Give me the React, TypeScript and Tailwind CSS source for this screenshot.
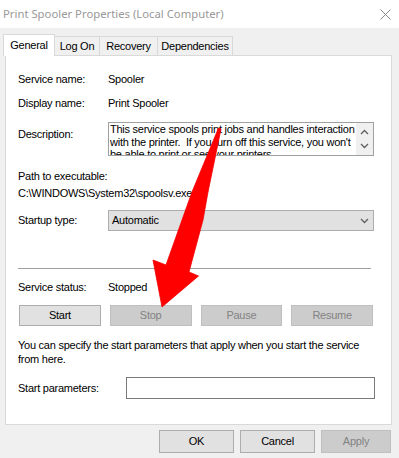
import React from 'react';

const body = { fontFamily: '"Liberation Sans", Arial, sans-serif' };
const title = { fontFamily: '"Noto Sans", "Open Sans", sans-serif' };

function Tab({ label, active, width }: { label: string; active?: boolean; width: string }) {
  if (active) {
    return (
      <div
        className={`${width} relative z-10 -mb-px h-[22px] border border-b-0 border-[#d9d9d9] bg-white flex items-center justify-center text-[11px] text-black`}
      >
        {label}
      </div>
    );
  }
  return (
    <div
      className={`${width} h-[19px] border border-b-0 border-l-0 border-[#d9d9d9] bg-[#f0f0f0] flex items-center justify-center text-[11px] text-black`}
    >
      {label}
    </div>
  );
}

function Btn({ label, disabled, className = '' }: { label: string; disabled?: boolean; className?: string }) {
  return (
    <div
      className={`h-[21px] flex items-center justify-center border text-[11px] ${
        disabled ? 'bg-[#cccccc] border-[#bfbfbf] text-[#838383]' : 'bg-[#e1e1e1] border-[#adadad] text-black'
      } ${className}`}
    >
      {label}
    </div>
  );
}

function Chevron({ up }: { up?: boolean }) {
  return (
    <svg width="9" height="6" viewBox="0 0 9 6" className="block">
      <polyline
        points={up ? '1,5 4.5,1.5 8,5' : '1,1 4.5,4.5 8,1'}
        fill="none"
        stroke="#606060"
        strokeWidth="1.3"
      />
    </svg>
  );
}

export default function App() {
  return (
    <div className="relative w-[399px] h-[458px] overflow-hidden bg-[#f0f0f0] tracking-[-0.25px]" style={body}>
      {/* Title bar */}
      <div className="h-[28px] bg-white flex items-center justify-between pl-[3px] pr-[8px]">
        <span className="text-[11.3px] tracking-normal text-[#999999]" style={title}>
          Print Spooler Properties (Local Computer)
        </span>
        <svg width="11" height="11" viewBox="0 0 11 11">
          <path d="M0.5 0.5L10.5 10.5M10.5 0.5L0.5 10.5" stroke="#8a8a8a" strokeWidth="1" />
        </svg>
      </div>

      {/* Tabs */}
      <div className="flex items-end pl-[3px] pt-[6px]">
        <Tab label="General" active width="w-[52px]" />
        <Tab label="Log On" width="w-[45px]" />
        <Tab label="Recovery" width="w-[58px]" />
        <Tab label="Dependencies" width="w-[75px]" />
      </div>

      {/* Panel */}
      <div className="ml-[5px] w-[387px] h-[370px] border border-[#d9d9d9] bg-white pl-[12px] pr-[17px] text-[11px] text-black">
        <div className="mt-[16px] flex h-[14px] items-center">
          <span className="w-[90px]">Service name:</span>
          <span>Spooler</span>
        </div>
        <div className="mt-[10px] flex h-[14px] items-center">
          <span className="w-[90px]">Display name:</span>
          <span>Print Spooler</span>
        </div>
        <div className="mt-[12px] flex items-start">
          <span className="w-[90px] pt-[5px] leading-[14px]">Description:</span>
          <div className="flex h-[34px] flex-1 border border-[#a0a0a0] overflow-hidden">
            <div className="flex-1 pl-[1px] leading-[12.7px] text-[11px] text-black whitespace-nowrap overflow-hidden">
              <div>This service spools print jobs and handles interaction</div>
              <div>with the printer.&nbsp; If you turn off this service, you won't</div>
              <div>be able to print or see your printers.</div>
            </div>
            <div className="w-[17px] bg-[#f0f0f0] flex flex-col items-center pt-[6px] gap-[8px]">
              <Chevron up />
              <Chevron />
            </div>
          </div>
        </div>
        <div className="mt-[13px] h-[14px] flex items-center">Path to executable:</div>
        <div className="mt-[3px] h-[14px] flex items-center">C:\WINDOWS\System32\spoolsv.exe</div>
        <div className="mt-[10px] flex items-center">
          <span className="w-[90px]">Startup type:</span>
          <div className="flex-1 h-[21px] border border-[#adadad] bg-[#e1e1e1] flex items-center justify-between pl-[3px] pr-[4px]">
            <span>Automatic</span>
            <Chevron />
          </div>
        </div>
        <div className="mt-[37px] mr-[3px] h-px bg-[#a0a0a0]" />
        <div className="mt-[11px] flex h-[14px] items-center">
          <span className="w-[90px]">Service status:</span>
          <span>Stopped</span>
        </div>
        <div className="mt-[11px] ml-[1px] mr-[1px] grid grid-cols-4 gap-[9px]">
          <Btn label="Start" />
          <Btn label="Stop" disabled />
          <Btn label="Pause" disabled />
          <Btn label="Resume" disabled />
        </div>
        <div className="mt-[12px] leading-[14px] whitespace-nowrap">
          You can specify the start parameters that apply when you start the service
          <br />
          from here.
        </div>
        <div className="mt-[11px] flex items-center">
          <span className="w-[108px]">Start parameters:</span>
          <div className="flex-1 -mr-[1px] h-[22px] border border-[#7a7a7a] bg-white" />
        </div>
      </div>

      {/* Dialog buttons */}
      <div className="mt-[5px] flex justify-end gap-[6px] pr-[8px]">
        <Btn label="OK" className="w-[75px] h-[23px]" />
        <Btn label="Cancel" className="w-[75px] h-[23px]" />
        <Btn label="Apply" disabled className="w-[70px] h-[23px]" />
      </div>

      {/* Red arrow overlay */}
      <svg
        className="absolute left-0 top-0 pointer-events-none"
        width="399"
        height="458"
        viewBox="0 0 399 458"
      >
        <polygon
          points="218.5,128 221,129 208,192 203,220 189,272 198.5,276 162,307 153,260 166,265 182,220 192,192"
          fill="#ff0000"
          stroke="#f20000"
          strokeWidth="0.8"
          strokeLinejoin="round"
        />
      </svg>
    </div>
  );
}
